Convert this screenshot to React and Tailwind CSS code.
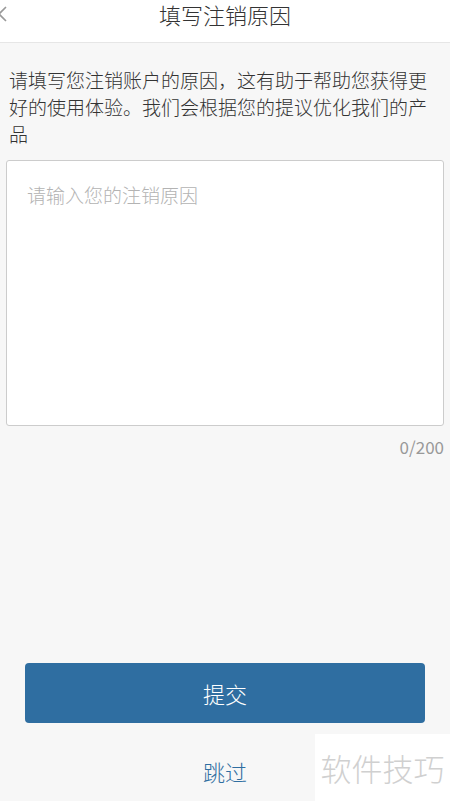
export default function App() {
  const font = { fontFamily: '"Noto Sans CJK SC", "Noto Sans", sans-serif' };
  return (
    <div className="relative w-[450px] h-[801px] bg-[#f7f7f7] overflow-hidden flex flex-col" style={font}>
      <div className="relative h-[43px] bg-white border-b border-[#e6e6e6] flex items-start justify-center">
        <svg className="absolute left-[-4px] top-[6px]" width="12" height="16" viewBox="0 0 12 16">
          <path d="M10 1 L3 8 L10 15" fill="none" stroke="#999" strokeWidth="1.6" />
        </svg>
        <span className="text-[22px] leading-[27px] text-[#333] mt-[1px] font-light">填写注销原因</span>
      </div>
      <p className="pl-[9px] pr-[9px] pt-[23px] text-[19px] leading-[27px] text-[#333] font-light">
        请填写您注销账户的原因，这有助于帮助您获得更好的使用体验。我们会根据您的提议优化我们的产品
      </p>
      <div className="mx-[6px] mt-[13px] h-[266px] bg-white border border-[#cccccc] rounded-[3px] px-[20px] pt-[21px]">
        <span className="text-[19px] leading-[26px] text-[#b3b3b3] font-light">请输入您的注销原因</span>
      </div>
      <div className="mt-[9px] pr-[6px] text-right text-[17px] leading-[24px] text-[#999]">0/200</div>
      <div className="flex-1" />
      <button className="mx-[25px] h-[60px] bg-[#2f6ea1] rounded-[4px] text-white text-[22px] font-light" style={font}>提交</button>
      <div className="h-[78px] flex items-center justify-center pt-[18px]">
        <span className="text-[22px] text-[#2f6ea1] leading-[30px] font-light">跳过</span>
      </div>
      <div className="absolute left-[315px] top-[734px] w-[135px] h-[67px] bg-white flex items-center justify-center">
        <span className="text-[31px] text-[#d0d0d0] leading-[40px] font-light">软件技巧</span>
      </div>
    </div>
  );
}
